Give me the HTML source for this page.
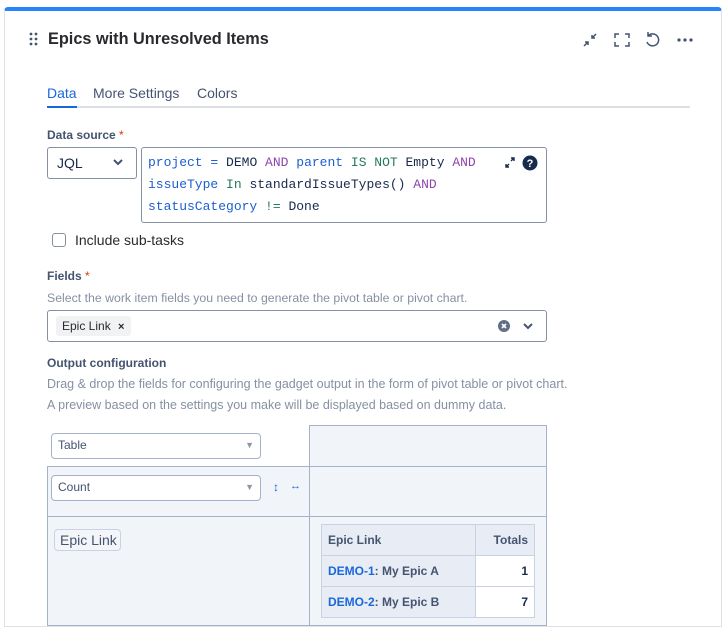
<!DOCTYPE html>
<html><head><meta charset="utf-8"><style>
*{box-sizing:border-box;margin:0;padding:0}
body{width:726px;height:611px;overflow:hidden;background:#fff;font-family:"Liberation Sans",sans-serif;color:#172b4d;position:relative}
.a{position:absolute}
.card{left:4px;top:7px;width:718px;height:620px;border:1px solid #dfe1e6;border-top:4px solid #2684ff;border-radius:4px 4px 0 0}
.lbl{font-size:12px;font-weight:bold;color:#44546f}
.lbl span{color:#de350b;font-weight:normal}
.hint{font-size:12.3px;color:#8590a2;white-space:nowrap}
.mono{font-family:"Liberation Mono",monospace;font-size:13px;line-height:22px;color:#172b4d}
.k{color:#1d5fcf}.p{color:#8e44ad}.g{color:#237a5a}
.sel{border:1px solid #a5b2c9;border-radius:4px;background:#fff;font-size:12px;color:#44546f;padding:0 6px;line-height:23px}
.sel i{position:absolute;right:6px;top:0;font-style:normal;color:#8d97a8;font-size:9px}
.bg{background:#f1f4f9;border:1px solid #a5b2c9}
td{border:1px solid #c9d2e3;font-size:12px;padding:0 6px;height:31px;white-space:nowrap}
</style></head><body>
<div class="a card"></div>
<svg class="a" style="left:29px;top:32px" width="10" height="15"><g fill="#44546f"><circle cx="2" cy="2" r="1.4"/><circle cx="7" cy="2" r="1.4"/><circle cx="2" cy="7" r="1.4"/><circle cx="7" cy="7" r="1.4"/><circle cx="2" cy="12" r="1.4"/><circle cx="7" cy="12" r="1.4"/></g></svg>
<div class="a" style="left:48px;top:30px;font-size:16.3px;font-weight:bold;color:#292a2e">Epics with Unresolved Items</div>
<svg class="a" style="left:580px;top:30px" width="120" height="20" fill="none" stroke="#44546f" stroke-width="1.5">
<path d="M4 16l4-4M5 12h3v3M16 4l-4 4M12 5v3h3"/>
<path d="M35 8V4h4M45 4h4v4M49 12v4h-4M39 16h-4v-4"/>
<path d="M68 6a6 6 0 1 1-1 6M68 2v4h4"/>
<circle cx="99" cy="10" r="0.9" fill="#44546f"/><circle cx="105" cy="10" r="0.9" fill="#44546f"/><circle cx="111" cy="10" r="0.9" fill="#44546f"/>
</svg>
<div class="a" style="left:47px;top:85px;font-size:14px;color:#1868db">Data</div>
<div class="a" style="left:93px;top:85px;font-size:14px;color:#44546f">More Settings</div>
<div class="a" style="left:197px;top:85px;font-size:14px;color:#44546f">Colors</div>
<div class="a" style="left:47px;top:106px;width:643px;height:2px;background:#dcdfe4"></div>
<div class="a" style="left:47px;top:106px;width:30px;height:2px;background:#1868db"></div>
<div class="a lbl" style="left:47px;top:128px">Data source <span>*</span></div>
<div class="a" style="left:47px;top:147px;width:90px;height:32px;border:1px solid #8590a2;border-radius:3px;font-size:14px;padding:7px 9px;color:#172b4d">JQL</div>
<svg class="a" style="left:112px;top:158px" width="12" height="8" fill="none" stroke="#44546f" stroke-width="2"><path d="M2 2l4 4 4-4"/></svg>
<div class="a" style="left:141px;top:147px;width:406px;height:76px;border:1px solid #8590a2;border-radius:3px"></div>
<div class="a mono" style="left:148px;top:152px;white-space:pre"><span class="k">project</span> <span class="k">=</span> DEMO <span class="p">AND</span> <span class="k">parent</span> <span class="g">IS NOT</span> Empty <span class="p">AND</span>
<span class="k">issueType</span> <span class="g">In</span> standardIssueTypes() <span class="p">AND</span>
<span class="k">statusCategory</span> <span class="g">!=</span> Done</div>
<svg class="a" style="left:503px;top:155px" width="36" height="16"><path d="M3 12l3-3M3 9v3h3M11 3l-3 3M8 3h3v3" stroke="#172b4d" stroke-width="1.4" fill="none"/><circle cx="27" cy="8" r="7.5" fill="#172b4d"/><text x="27" y="12" font-size="11" font-weight="bold" fill="#fff" text-anchor="middle" font-family="Liberation Sans">?</text></svg>
<div class="a" style="left:52px;top:233px;width:14px;height:14px;border:1.5px solid #8590a2;border-radius:3px"></div>
<div class="a" style="left:75px;top:232px;font-size:14px;color:#292a2e">Include sub-tasks</div>
<div class="a lbl" style="left:47px;top:269px">Fields <span>*</span></div>
<div class="a hint" style="left:47px;top:291px">Select the work item fields you need to generate the pivot table or pivot chart.</div>
<div class="a" style="left:47px;top:310px;width:500px;height:32px;border:1px solid #8590a2;border-radius:3px"></div>
<div class="a" style="left:56px;top:316px;width:75px;height:20px;background:#f1f2f4;border-radius:3px;font-size:12px;padding:3px 6px;color:#292a2e;white-space:nowrap">Epic Link <b style="margin-left:4px;font-size:11px">×</b></div>
<svg class="a" style="left:497px;top:318px" width="40" height="16"><circle cx="7" cy="8" r="6" fill="#626f86"/><path d="M5 6l4 4M9 6l-4 4" stroke="#fff" stroke-width="1.6"/><path d="M27 6l4 4 4-4" stroke="#44546f" stroke-width="2" fill="none"/></svg>
<div class="a lbl" style="left:47px;top:356px">Output configuration</div>
<div class="a hint" style="left:47px;top:377px;font-size:12.5px">Drag &amp; drop the fields for configuring the gadget output in the form of pivot table or pivot chart.</div>
<div class="a hint" style="left:47px;top:398px;font-size:12.5px">A preview based on the settings you make will be displayed based on dummy data.</div>
<div class="a bg" style="left:309px;top:425px;width:238px;height:42px"></div>
<div class="a bg" style="left:47px;top:466px;width:263px;height:51px"></div>
<div class="a bg" style="left:309px;top:466px;width:238px;height:51px"></div>
<div class="a bg" style="left:47px;top:516px;width:263px;height:110px"></div>
<div class="a bg" style="left:309px;top:516px;width:238px;height:110px"></div>
<div class="a sel" style="left:51px;top:433px;width:210px;height:26px">Table<i>▼</i></div>
<div class="a sel" style="left:51px;top:475px;width:210px;height:26px">Count<i>▼</i></div>
<div class="a" style="left:273px;top:480px;font-size:12px;color:#1868db">↕</div>
<div class="a" style="left:290px;top:480px;font-size:11px;color:#1868db">↔</div>
<div class="a" style="left:54px;top:529px;width:67px;height:22px;border:1px solid #c9d2e3;border-radius:4px;background:#f3f5f9;font-size:14px;padding:2px 5px;color:#44546f;white-space:nowrap">Epic Link</div>
<table class="a" style="left:321px;top:524px;width:214px;border-collapse:collapse">
<tr style="background:#e8edf5;font-weight:bold;color:#44546f"><td style="width:154px">Epic Link</td><td style="text-align:right">Totals</td></tr>
<tr><td style="background:#e8edf5;font-weight:bold;color:#44546f"><span style="color:#1868db">DEMO-1</span>: My Epic A</td><td style="background:#fff;text-align:right;font-weight:bold">1</td></tr>
<tr><td style="background:#e8edf5;font-weight:bold;color:#44546f"><span style="color:#1868db">DEMO-2</span>: My Epic B</td><td style="background:#fff;text-align:right;font-weight:bold">7</td></tr>
</table>
</body></html>
